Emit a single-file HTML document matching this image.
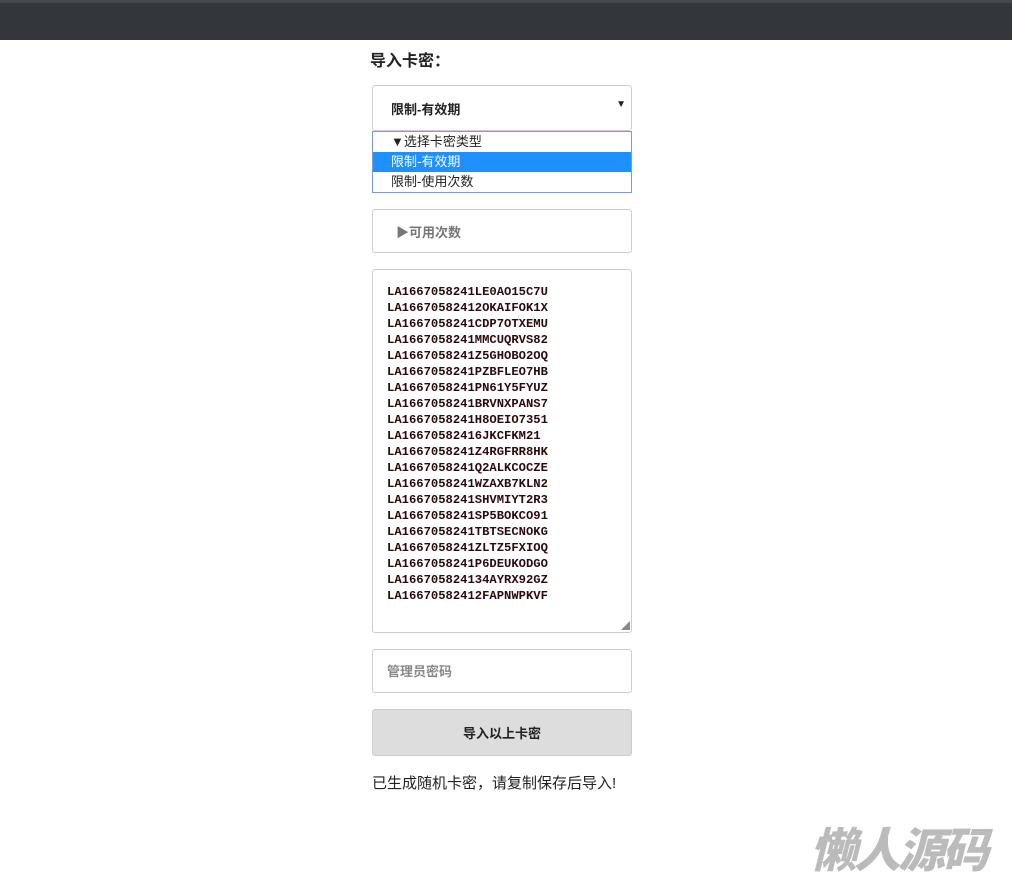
<!DOCTYPE html>
<html><head><meta charset="utf-8"><style>
body{margin:0;width:1012px;height:879px;background:#fff;font-family:"Liberation Sans","Noto Sans CJK SC",sans-serif;position:relative;overflow:hidden;color:#222}
.bar{position:absolute;left:0;top:0;width:1012px;height:40px;background:#33363a;border-top:3px solid #45484c;box-sizing:border-box}
.abs{position:absolute}
.box{position:absolute;left:372px;width:260px;border:1px solid #ccc;border-radius:3px;box-sizing:border-box;background:#fff}
</style></head><body>
<div class="bar"></div>
<div class="abs" style="left:370px;top:47px;font-size:16px;font-weight:bold;color:#222">导入卡密：</div>
<div class="box" style="top:85px;height:46px"><span class="abs" style="left:18px;top:13px;font-size:13px;font-weight:bold;color:#222">限制-有效期</span><span class="abs" style="right:5px;top:13px;font-size:10px">▼</span></div>
<div class="abs" style="left:372px;top:131px;width:260px;height:62px;border:1px solid #7a9cd3;box-sizing:border-box;font-size:13px;background:#fff">
<div style="height:20px;line-height:20px;padding-left:18px">▼选择卡密类型</div>
<div style="height:20px;line-height:20px;padding-left:18px;background:#1e90ff;color:#fff">限制-有效期</div>
<div style="height:20px;line-height:20px;padding-left:18px">限制-使用次数</div>
</div>
<div class="box" style="top:209px;height:44px"><span class="abs" style="left:23px;top:12px;font-size:13px;font-weight:bold;color:#777">▶可用次数</span></div>
<div class="box" style="top:269px;height:364px"><pre class="abs" style="left:14px;top:14px;margin:0;font-family:'Liberation Mono',monospace;font-weight:bold;font-size:12.2px;line-height:16px;color:#2a0a0a">LA1667058241LE0AO15C7U
LA16670582412OKAIFOK1X
LA1667058241CDP7OTXEMU
LA1667058241MMCUQRVS82
LA1667058241Z5GHOBO2OQ
LA1667058241PZBFLEO7HB
LA1667058241PN61Y5FYUZ
LA1667058241BRVNXPANS7
LA1667058241H8OEIO7351
LA16670582416JKCFKM21
LA1667058241Z4RGFRR8HK
LA1667058241Q2ALKCOCZE
LA1667058241WZAXB7KLN2
LA1667058241SHVMIYT2R3
LA1667058241SP5BOKCO91
LA1667058241TBTSECNOKG
LA1667058241ZLTZ5FXIOQ
LA1667058241P6DEUKODGO
LA166705824134AYRX92GZ
LA16670582412FAPNWPKVF</pre><span class="abs" style="right:1px;bottom:0;font-size:9px;color:#888">◢</span></div>
<div class="box" style="top:649px;height:44px"><span class="abs" style="left:14px;top:11px;font-size:13px;font-weight:bold;color:#888">管理员密码</span></div>
<div class="box" style="top:709px;height:47px;background:#ddd;border-color:#ccc"><span class="abs" style="left:0;width:258px;text-align:center;top:13px;font-size:13px;font-weight:bold;color:#222">导入以上卡密</span></div>
<div class="abs" style="left:372px;top:772px;font-size:15px;color:#222">已生成随机卡密，请复制保存后导入!</div>
<div class="abs" style="left:810px;top:812px;font-size:47px;font-weight:900;font-style:italic;color:#bbb;letter-spacing:-3px">懒人源码</div>
</body></html>
